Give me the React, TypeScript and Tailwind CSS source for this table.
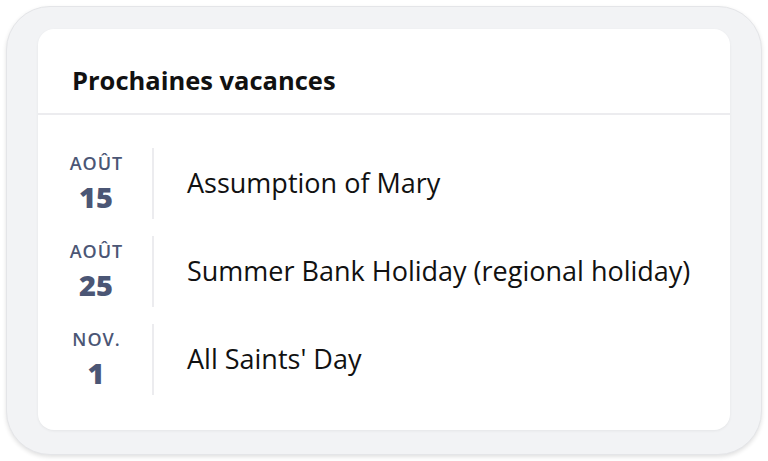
const holidays = [
  { month: "AOÛT", day: "15", name: "Assumption of Mary" },
  { month: "AOÛT", day: "25", name: "Summer Bank Holiday (regional holiday)" },
  { month: "NOV.", day: "1", name: "All Saints' Day" },
]

export default function App() {
  return (
    <div className="w-[768px] h-[461px] bg-white p-[6px] font-['Open_Sans',sans-serif]">
      <div className="h-full rounded-[44px] bg-[#f2f3f5] border border-[#e4e5e8] shadow-[0_2px_4px_rgba(0,0,0,0.12)] pt-[22px] pb-[24px] px-[31px]">
        <div className="h-full rounded-[16px] bg-white shadow-[0_1px_3px_rgba(0,0,0,0.06)] flex flex-col">
          <div className="h-[86px] border-b-2 border-[#ececef] flex items-end pb-[17px] px-[34px]">
            <h1 className="text-[25.5px] leading-[32px] font-bold text-[#111]">Prochaines vacances</h1>
          </div>
          <div className="flex flex-col gap-[17px] pt-[33px]">
            {holidays.map((h) => (
              <div key={h.name} className="flex items-center h-[71px]">
                <div className="w-[76px] ml-[20px] flex flex-col items-center text-[#4b5675]">
                  <span className="text-[18px] font-semibold leading-[20px] tracking-[1px] pl-[1px]">{h.month}</span>
                  <span className="text-[29px] font-extrabold leading-[36px] mt-[6px]">{h.day}</span>
                </div>
                <div className="ml-[18px] h-full border-l-2 border-[#ececef] flex items-center pl-[33px]">
                  <span className="text-[27px] text-[#111]">{h.name}</span>
                </div>
              </div>
            ))}
          </div>
        </div>
      </div>
    </div>
  )
}
